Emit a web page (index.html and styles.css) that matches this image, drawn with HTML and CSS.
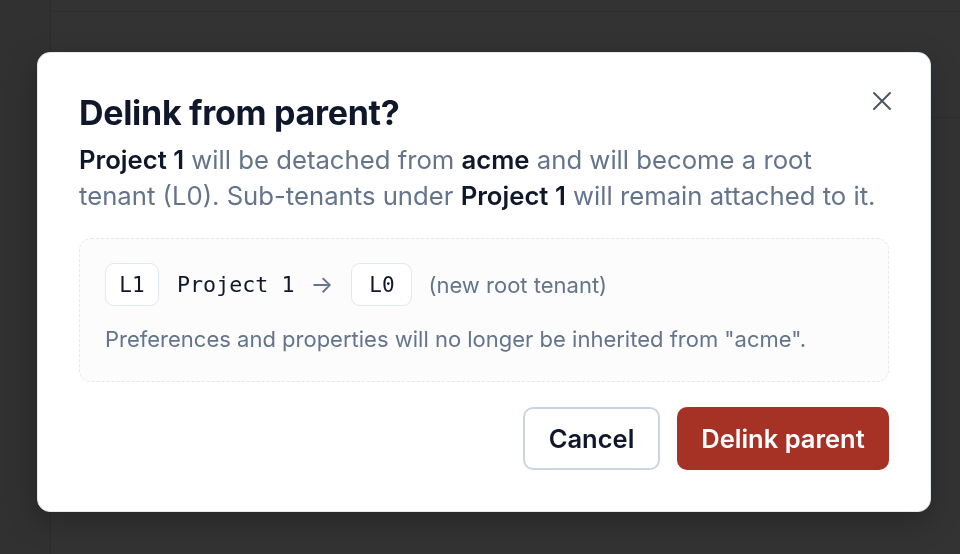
FILE: index.html
```html
<!DOCTYPE html>
<html>
<head>
<meta charset="utf-8">
<link rel="stylesheet" href="styles.css">
</head>
<body>
<div class="app">
  <aside class="sidebar"></aside>
  <main class="main">
    <div class="topbar"></div>
    <div class="toolbar"></div>
  </main>
</div>
<div class="overlay">
  <div class="modal" role="dialog">
    <button class="close" aria-label="Close">
      <svg width="20" height="20" viewBox="0 0 20 20"><path d="M2 2 L18 18 M18 2 L2 18" stroke="#4b5563" stroke-width="2" stroke-linecap="round" fill="none"/></svg>
    </button>
    <h2 class="title">Delink from parent?</h2>
    <p class="desc"><strong>Project 1</strong> will be detached from <strong>acme</strong> and will become a root tenant (L0). Sub-tenants under <strong>Project 1</strong> will remain attached to it.</p>
    <div class="preview">
      <div class="row">
        <span class="chip">L1</span>
        <span class="mono">Project 1</span>
        <span class="arrow">→</span>
        <span class="chip chip-new">L0</span>
        <span class="note">(new root tenant)</span>
      </div>
      <p class="hint">Preferences and properties will no longer be inherited from "acme".</p>
    </div>
    <div class="actions">
      <button class="btn btn-secondary">Cancel</button>
      <button class="btn btn-danger">Delink parent</button>
    </div>
  </div>
</div>
</body>
</html>
```
FILE: styles.css
```css
* { box-sizing: border-box; }
html, body { margin: 0; height: 100%; }
body {
  background: #333333;
  font-family: Inter, "Noto Sans", sans-serif;
  overflow: hidden;
}
.app { display: flex; height: 100%; }
.sidebar {
  width: 51px;
  background: #313131;
  border-right: 1px solid #2c2c2c;
}
.main { flex: 1; }
.topbar { height: 12px; border-bottom: 1px solid #2d2d2d; }
.toolbar { height: 106px; border-bottom: 1px solid #2d2d2d; }

.overlay {
  position: fixed;
  inset: 0;
  display: flex;
  align-items: flex-start;
  padding: 52px 0 0 37px;
}
.modal {
  position: relative;
  width: 894px;
  background: #ffffff;
  border: 1px solid #e2e8f0;
  border-radius: 13px;
  box-shadow: 0 10px 30px rgba(0,0,0,0.25);
  padding: 40px 41px 41px 41px;
}
.close {
  position: absolute;
  top: 36px;
  right: 36px;
  width: 24px;
  height: 24px;
  padding: 0;
  border: 0;
  background: none;
  display: flex;
  align-items: center;
  justify-content: center;
}
.title {
  margin: 0;
  font-size: 34px;
  line-height: 40px;
  font-weight: 700;
  color: #0f172a;
  letter-spacing: -0.3px;
}
.desc {
  margin: 9px 0 0;
  max-width: 806px;
  font-size: 25.7px;
  line-height: 36px;
  color: #64748b;
}
.desc strong { color: #0f172a; font-weight: 600; }
.preview {
  margin-top: 24px;
  border: 1.5px dashed #e2e8f0;
  border-radius: 12px;
  background: #fcfcfd;
  padding: 24px 25px 27px;
}
.row {
  display: flex;
  align-items: center;
  gap: 18px;
}
.chip {
  display: inline-flex;
  align-items: center;
  justify-content: center;
  height: 43px;
  width: 54px;
  border: 1.5px solid #e2e8f0;
  border-radius: 9px;
  background: #ffffff;
  font-family: "DejaVu Sans Mono", "Liberation Mono", monospace;
  font-size: 21px;
  color: #0f172a;
}
.chip-new { width: 61px; }
.mono {
  font-family: "DejaVu Sans Mono", "Liberation Mono", monospace;
  font-size: 21.7px;
  color: #0f172a;
}
.arrow { font-size: 24px; line-height: 1; color: #64748b; margin-left: -2px; }
.note { font-size: 22px; color: #64748b; margin-left: -2px; }
.hint {
  margin: 18px 0 0;
  font-size: 22px;
  line-height: 30px;
  color: #64748b;
}
.actions {
  display: flex;
  justify-content: flex-end;
  gap: 17px;
  margin-top: 25px;
}
.btn {
  height: 63px;
  border-radius: 10px;
  font-family: Inter, "Noto Sans", sans-serif;
  font-size: 25.5px;
  font-weight: 600;
  padding: 0;
}
.btn-secondary {
  background: #ffffff;
  border: 2px solid #cbd5e1;
  color: #0f172a;
  width: 137px;
}
.btn-danger {
  background: #a63125;
  border: 0;
  color: #ffffff;
  width: 212px;
}
```
